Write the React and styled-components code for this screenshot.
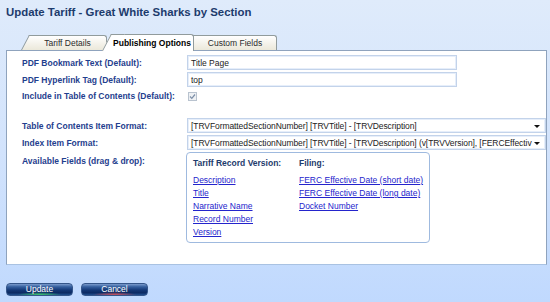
import React from 'react';
import styled, { createGlobalStyle, css } from 'styled-components';

const GlobalStyle = createGlobalStyle`
  html, body {
    margin: 0;
    padding: 0;
  }
  body {
    font-family: "Liberation Sans", Arial, sans-serif;
  }
`;

const Page = styled.div`
  box-sizing: border-box;
  width: 550px;
  height: 302px;
  padding: 6px 3px 0 6px;
  background: linear-gradient(180deg, #dfebfb 0%, #d2e3fc 50%, #c0d9fe 100%);
  overflow: hidden;
`;

const Title = styled.h1`
  margin: 0;
  font-size: 11.4px;
  line-height: 13px;
  font-weight: 700;
  color: #1d3b6c;
`;

const TabBar = styled.div`
  position: relative;
  z-index: 2;
  display: flex;
  align-items: flex-end;
  height: 15px;
  margin-top: 16px;
  padding-left: 17px;
`;

const Tab = styled.div`
  position: relative;
  z-index: ${(p) => (p.$active ? 3 : 1)};
  box-sizing: border-box;
  width: ${(p) => p.$w}px;
  height: ${(p) => (p.$active ? 17 : 15)}px;
  margin-left: ${(p) => p.$ml || 0}px;
  margin-bottom: ${(p) => (p.$active ? -1 : 0)}px;
  border: 1px solid #919b9c;
  border-bottom: none;
  border-left: ${(p) => (p.$slant ? 'none' : '1px solid #919b9c')};
  border-radius: 0 3px 0 0;
  background: ${(p) => (p.$active ? '#ffffff' : 'linear-gradient(180deg, #ffffff 0%, #f4f2ea 55%, #ebe8da 100%)')};
  display: flex;
  align-items: center;
  justify-content: center;
  padding-bottom: ${(p) => (p.$active ? 1 : 0)}px;
  font-size: 8.5px;
  font-weight: ${(p) => (p.$active ? 700 : 400)};
  color: ${(p) => (p.$active ? '#000' : '#2b2b2b')};
  ${(p) =>
    p.$slant &&
    css`
      &::before {
        content: '';
        position: absolute;
        top: -1px;
        left: 0;
        z-index: -1;
        box-sizing: border-box;
        width: 14px;
        height: calc(100% + 1px);
        border-top: 1px solid #919b9c;
        border-left: 1px solid #919b9c;
        background: inherit;
        transform: skewX(-28deg);
        transform-origin: top left;
      }
    `}
`;

const Panel = styled.div`
  box-sizing: border-box;
  height: 215px;
  border: 1px solid #8fa3bd;
  border-bottom-color: #a9c2e2;
  background: #ffffff;
  padding: 4px 1px 0 15px;
  display: grid;
  grid-template-columns: 165px 1fr;
  row-gap: 2px;
  align-content: start;
`;

const Label = styled.div`
  display: flex;
  align-items: ${(p) => (p.$top ? 'flex-start' : 'center')};
  padding-top: ${(p) => (p.$top ? 3 : 0)}px;
  font-size: 8.5px;
  line-height: 12px;
  font-weight: 700;
  color: #1f408e;
  white-space: nowrap;
`;

const Spacer = styled.div`
  grid-column: 1 / -1;
  height: 11px;
`;

const TextBox = styled.div`
  box-sizing: border-box;
  width: 270px;
  height: 15px;
  border: 1px solid #c3d3ea;
  box-shadow: inset 0 0 0 1px #e6eefa;
  padding: 0 3px;
  display: flex;
  align-items: center;
  font-size: 8.5px;
  color: #222;
`;

const CheckRow = styled.div`
  height: 14px;
  display: flex;
  align-items: center;
  padding-left: 1px;
`;

const Check = styled.span`
  box-sizing: border-box;
  width: 9px;
  height: 9px;
  border: 1px solid #b9c3cf;
  background: #eef1f4;
  display: flex;
  align-items: center;
  justify-content: center;
`;

const Select = styled.div`
  position: relative;
  box-sizing: border-box;
  width: 359px;
  height: 15px;
  border: 1px solid #c3d3ea;
  box-shadow: inset 0 0 0 1px #e6eefa;
  padding: 0 12px 0 3px;
  display: flex;
  align-items: center;
  font-size: 8.5px;
  color: #222;
  &::after {
    content: '';
    position: absolute;
    right: 5px;
    top: 6px;
    border-left: 3px solid transparent;
    border-right: 3px solid transparent;
    border-top: 3px solid #111;
  }
`;

const SelectText = styled.span`
  white-space: nowrap;
  letter-spacing: -0.08px;
`;

const FieldsBox = styled.div`
  box-sizing: border-box;
  width: 244px;
  margin-left: -1px;
  border: 1px solid #9fbadf;
  border-radius: 4px;
  padding: 4px 6px 3px 6px;
  display: grid;
  grid-template-columns: 106px 1fr;
`;

const FieldColumn = styled.div`
  display: flex;
  flex-direction: column;
`;

const FieldHead = styled.div`
  font-size: 8.5px;
  line-height: 12px;
  font-weight: 700;
  color: #1d3b6c;
  margin-bottom: 5px;
`;

const FieldLink = styled.a`
  font-size: 8.5px;
  line-height: 13px;
  color: #2424cc;
  text-decoration: underline;
  cursor: move;
  white-space: nowrap;
  align-self: flex-start;
`;

const Buttons = styled.div`
  display: flex;
  gap: 8px;
  margin-top: 18px;
`;

const Button = styled.button`
  position: relative;
  overflow: hidden;
  box-sizing: border-box;
  width: 67px;
  height: 13px;
  padding: 0;
  border: 1px solid #35568a;
  border-radius: 4px;
  background: linear-gradient(180deg, #7b9bcd 0%, #36609f 25%, #143876 55%, #0c2a62 80%, #21508f 100%);
  color: #ffffff;
  font-family: inherit;
  font-size: 8.5px;
  line-height: 11px;
  cursor: pointer;
  &::after {
    content: '';
    position: absolute;
    left: 15%;
    right: 15%;
    bottom: -3px;
    height: 6px;
    background: radial-gradient(ellipse at center, ${(p) => p.$glow} 0%, transparent 70%);
  }
  span {
    position: relative;
    z-index: 1;
  }
`;

const recordFields = ['Description', 'Title', 'Narrative Name', 'Record Number', 'Version'];
const filingFields = [
  'FERC Effective Date (short date)',
  'FERC Effective Date (long date)',
  'Docket Number',
];

export default function App() {
  return (
    <Page>
      <GlobalStyle />
      <Title>Update Tariff - Great White Sharks by Section</Title>
      <TabBar>
        <Tab $slant $w={78} $ml={6}>Tariff Details</Tab>
        <Tab $slant $active $w={83} $ml={4}>Publishing Options</Tab>
        <Tab $w={84} $ml={-1}>Custom Fields</Tab>
      </TabBar>
      <Panel>
        <Label>PDF Bookmark Text (Default):</Label>
        <TextBox>Title Page</TextBox>
        <Label>PDF Hyperlink Tag (Default):</Label>
        <TextBox>top</TextBox>
        <Label>Include in Table of Contents (Default):</Label>
        <CheckRow>
          <Check>
            <svg width="7" height="7" viewBox="0 0 7 7">
              <path d="M1 3.5 L2.8 5.3 L6 1.5" fill="none" stroke="#7d8fa8" strokeWidth="1.2" />
            </svg>
          </Check>
        </CheckRow>
        <Spacer />
        <Label>Table of Contents Item Format:</Label>
        <Select>
          <SelectText>[TRVFormattedSectionNumber] [TRVTitle] - [TRVDescription]</SelectText>
        </Select>
        <Label>Index Item Format:</Label>
        <Select>
          <SelectText>
            [TRVFormattedSectionNumber] [TRVTitle] - [TRVDescription] (v[TRVVersion], [FERCEffectiv
          </SelectText>
        </Select>
        <Label $top>Available Fields (drag &amp; drop):</Label>
        <FieldsBox>
          <FieldColumn>
            <FieldHead>Tariff Record Version:</FieldHead>
            {recordFields.map((f) => (
              <FieldLink key={f} href="#">{f}</FieldLink>
            ))}
          </FieldColumn>
          <FieldColumn>
            <FieldHead>Filing:</FieldHead>
            {filingFields.map((f) => (
              <FieldLink key={f} href="#">{f}</FieldLink>
            ))}
          </FieldColumn>
        </FieldsBox>
      </Panel>
      <Buttons>
        <Button $glow="#3fcf6a"><span>Update</span></Button>
        <Button $glow="#d8505a"><span>Cancel</span></Button>
      </Buttons>
    </Page>
  );
}
